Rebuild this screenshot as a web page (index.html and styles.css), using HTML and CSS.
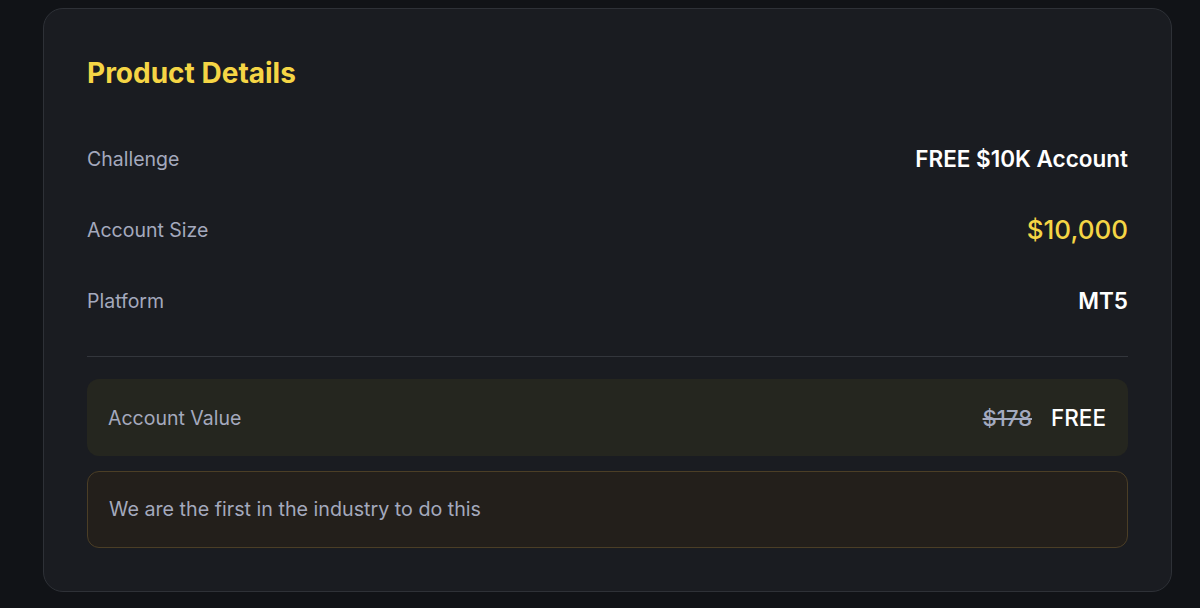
FILE: index.html
```html
<!DOCTYPE html>
<html lang="en">
<head>
    <meta charset="UTF-8">
    <meta name="viewport" content="width=device-width, initial-scale=1.0">
    <title>Product Details</title>
    <link rel="stylesheet" href="styles.css">
</head>
<body>
    <div class="card">
        <h2 class="card-title">Product Details</h2>

        <div class="detail-row">
            <span class="detail-label">Challenge</span>
            <span class="detail-value">FREE $10K Account</span>
        </div>
        <div class="detail-row">
            <span class="detail-label">Account Size</span>
            <span class="detail-value highlight">$10,000</span>
        </div>
        <div class="detail-row">
            <span class="detail-label">Platform</span>
            <span class="detail-value">MT5</span>
        </div>

        <div class="divider"></div>

        <div class="value-box">
            <span class="detail-label">Account Value</span>
            <div class="price">
                <span class="old-price">$178</span>
                <span class="new-price">FREE</span>
            </div>
        </div>

        <div class="note-box">
            We are the first in the industry to do this
        </div>
    </div>
</body>
</html>
```

FILE: styles.css
```css
body {
    margin: 0;
    padding: 8px 28px 17px 43px;
    font-family: Inter, "Noto Sans", sans-serif;
    background-color: #111317;
}
.card {
    padding: 48px 43px 43px;
    border: 1px solid #2e3137;
    border-radius: 20px;
    background-color: #1a1c21;
}
.card-title {
    margin: 0 0 34px;
    font-size: 28px;
    line-height: 32px;
    font-weight: 700;
    color: #f5d545;
}
.detail-row {
    display: flex;
    justify-content: space-between;
    align-items: center;
    height: 71px;
}
.detail-label {
    font-size: 19.5px;
    color: #a4a9bd;
}
.detail-value {
    font-size: 22.5px;
    font-weight: 600;
    color: #ffffff;
}
.detail-value.highlight {
    font-size: 26px;
    font-weight: 500;
    color: #f5d545;
}
.divider {
    margin-top: 20px;
    border-top: 1px solid #33363c;
}
.value-box {
    display: flex;
    justify-content: space-between;
    align-items: center;
    height: 77px;
    margin-top: 22px;
    padding: 0 22px 0 21px;
    border-radius: 12px;
    background-color: #25261f;
}
.price {
    display: flex;
    align-items: center;
    gap: 19px;
}
.old-price {
    font-size: 22px;
    font-weight: 500;
    color: #a3aac0;
    text-decoration: line-through;
}
.new-price {
    font-size: 22.5px;
    font-weight: 500;
    color: #ffffff;
}
.note-box {
    margin-top: 15px;
    padding: 24px 21px;
    border: 1px solid #4b3e26;
    border-radius: 12px;
    background-color: #231f1b;
    font-size: 19.7px;
    line-height: 27px;
    color: #a4a9bd;
}
```
